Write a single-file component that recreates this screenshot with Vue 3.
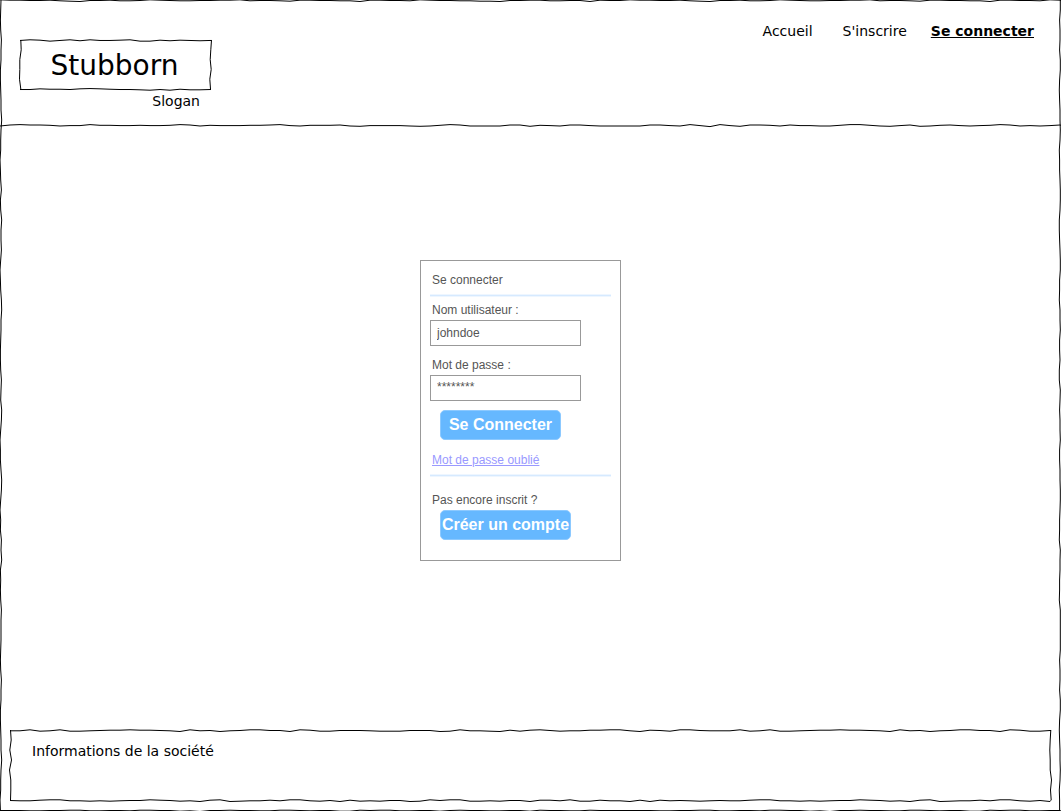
<script setup>
import { ref } from 'vue'

const username = ref('johndoe')
const password = ref('********')

const links = [
  { label: 'Accueil', href: '#accueil' },
  { label: "S'inscrire", href: '#inscription' },
  { label: 'Se connecter', href: '#connexion', current: true },
]

// Hand-drawn strokes: one digit per 10 units, 5 is on the line, each step is a third of a unit off it.
const STEP = 10
function edge(digits, length, base, vertical) {
  return Array.from({ length: Math.ceil(length / STEP) + 1 }, (_, i) => {
    const along = Math.min(i * STEP, length)
    const across = base + (Number(digits[i % digits.length]) - 5) / 3
    return vertical ? [across, along] : [along, across]
  })
}
function path(points, dx = 0, dy = 0) {
  return 'M' + points.map(([x, y]) => `${(x + dx).toFixed(1)} ${(y + dy).toFixed(1)}`).join('L')
}

const frame = [
  path(edge('344554678554665345665544365567445566844556345566778554466558455', 1061, 0.5)),
  path(edge('555665544665564455768554556644565577454466557545566557455664555', 1061, 810.5)),
  path(edge('6545766445668655345745866753457866544576587534468753547684545766', 811, 0.7, true)),
  path(edge('5534435532344542334554223455332445334225434453344554332544332555', 811, 1060.3, true)),
]
const divider = path(
  edge('7434457663556656653475666554367555478666678753477774485674467777744673693684457466775335786487546765347676457876466787', 1061, 0.3), 0, 2)

const logo = [
  path(edge('53475363554377464565', 191, 0.5), 1, 1),
  path(edge('55344532345567574665', 191, 50.5), 1, 1),
  path(edge('673326', 50, 0.5, true), 1, 1),
  path(edge('864735', 50, 190.5, true), 1, 1),
]
const footer = [
  path(edge('66376377654434456836586533558347755567775558736678474357664433684573356', 1041, 0.5), 1, 1),
  path(edge('56643366767655345768438766463367584767558735337767558446377466848465676', 1041, 70.5), 1, 1),
  path(edge('57382665', 70, 0.5, true), 1, 1),
  path(edge('64344857', 70, 1040.5, true), 1, 1),
]
</script>

<template>
  <div class="page">
    <svg class="sketch" viewBox="0 0 1061 811" preserveAspectRatio="none" aria-hidden="true">
      <path v-for="(d, i) in frame" :key="i" :d="d" />
    </svg>

    <header class="header">
      <div class="brand">
        <div class="logo">
          <svg class="sketch" viewBox="0 0 193 53" preserveAspectRatio="none" aria-hidden="true">
            <path v-for="(d, i) in logo" :key="i" :d="d" />
          </svg>
          <h1>Stubborn</h1>
        </div>
        <p class="slogan">Slogan</p>
      </div>
      <nav class="nav">
        <a
          v-for="link in links"
          :key="link.label"
          :href="link.href"
          :class="{ current: link.current }"
          :aria-current="link.current ? 'page' : undefined"
        >{{ link.label }}</a>
      </nav>
    </header>
    <svg class="divider" viewBox="0 0 1061 5" preserveAspectRatio="none" aria-hidden="true">
      <path :d="divider" />
    </svg>

    <main class="main">
      <form class="card" @submit.prevent>
        <h2>Se connecter</h2>
        <hr />
        <label for="username">Nom utilisateur :</label>
        <input id="username" v-model="username" type="text" autocomplete="username" />
        <label for="password" class="spaced">Mot de passe :</label>
        <input id="password" v-model="password" class="masked" type="text" autocomplete="off" />
        <button type="submit" class="login">Se Connecter</button>
        <a href="#oubli" class="forgot">Mot de passe oublié</a>
        <hr />
        <p class="prompt">Pas encore inscrit ?</p>
        <button type="button" class="create">Créer un compte</button>
      </form>
    </main>

    <footer class="footer">
      <svg class="sketch" viewBox="0 0 1043 73" preserveAspectRatio="none" aria-hidden="true">
        <path v-for="(d, i) in footer" :key="i" :d="d" />
      </svg>
      <p>Informations de la société</p>
    </footer>
  </div>
</template>

<style>
body {
  background: #fff;
}
</style>

<style scoped>
.page {
  position: relative;
  display: flex;
  flex-direction: column;
  min-height: 100vh;
  box-sizing: border-box;
  padding-bottom: 9px;
  color: #000;
  font: 14px/20px Verdana, "DejaVu Sans", sans-serif;
}
h1,
h2,
p {
  margin: 0;
}
.sketch {
  position: absolute;
  inset: 0;
  width: 100%;
  height: 100%;
  pointer-events: none;
}
.sketch path,
.divider path {
  fill: none;
  stroke: #000;
  stroke-width: 1px;
  vector-effect: non-scaling-stroke;
}
.header {
  display: flex;
  justify-content: space-between;
  align-items: flex-start;
  padding: 21px 27px 12px 19px;
}
.brand {
  padding-top: 18px;
}
.logo {
  position: relative;
  box-sizing: border-box;
  width: 193px;
  height: 52px;
  padding: 9px 2px 7px 0;
  text-align: center;
}
.logo h1 {
  font-size: 28px;
  line-height: 36px;
  font-weight: 400;
}
.slogan {
  padding-right: 12px;
  text-align: right;
}
.nav {
  display: flex;
  gap: 30px;
}
.nav a {
  color: inherit;
  text-decoration: none;
}
.nav .current {
  margin-left: -6px;
  font-weight: 700;
  text-decoration: underline;
}
.divider {
  display: block;
  flex: none;
  width: 100%;
  height: 5px;
}
.main {
  flex: 1;
  display: flex;
  align-items: center;
  justify-content: center;
  padding: 0 20px 37px 0;
}
.card {
  box-sizing: border-box;
  display: flex;
  flex-direction: column;
  align-items: flex-start;
  width: 201px;
  padding: 9px 9px 20px;
  border: 1px solid #999;
  color: #555;
  font: 12px/20px Helvetica, "Liberation Sans", Arial, sans-serif;
}
.card h2 {
  padding-left: 2px;
  font-size: 12px;
  font-weight: 400;
}
.card hr {
  width: 100%;
  height: 1px;
  margin: 4px 0 3px;
  border: solid #eef6ff;
  border-width: 1px 0;
  background: #d6eaff;
}
.card label,
.prompt {
  padding-left: 2px;
}
.card .spaced {
  margin-top: 9px;
}
.card input {
  box-sizing: border-box;
  width: 151px;
  height: 26px;
  padding: 0 6px;
  border: 1px solid #999;
  border-radius: 0;
  background: #fff;
  color: #555;
  font: inherit;
}
.card .masked {
  padding-bottom: 2px;
}
.card button {
  height: 30px;
  margin-left: 10px;
  padding: 0;
  border: 1px solid #8cc9ff;
  border-radius: 5px;
  background: #66b8ff;
  color: #fff;
  font: 700 16px/20px Helvetica, "Liberation Sans", Arial, sans-serif;
  white-space: nowrap;
  cursor: pointer;
}
.card .login {
  width: 121px;
  margin-top: 9px;
}
.card .create {
  width: 131px;
}
.forgot {
  margin: 10px 0 0 2px;
  color: #9999ff;
  text-decoration: underline;
}
.prompt {
  margin-top: 10px;
}
.footer {
  position: relative;
  min-height: 53px;
  margin: 0 9px;
  padding: 12px 23px 8px;
}
</style>
